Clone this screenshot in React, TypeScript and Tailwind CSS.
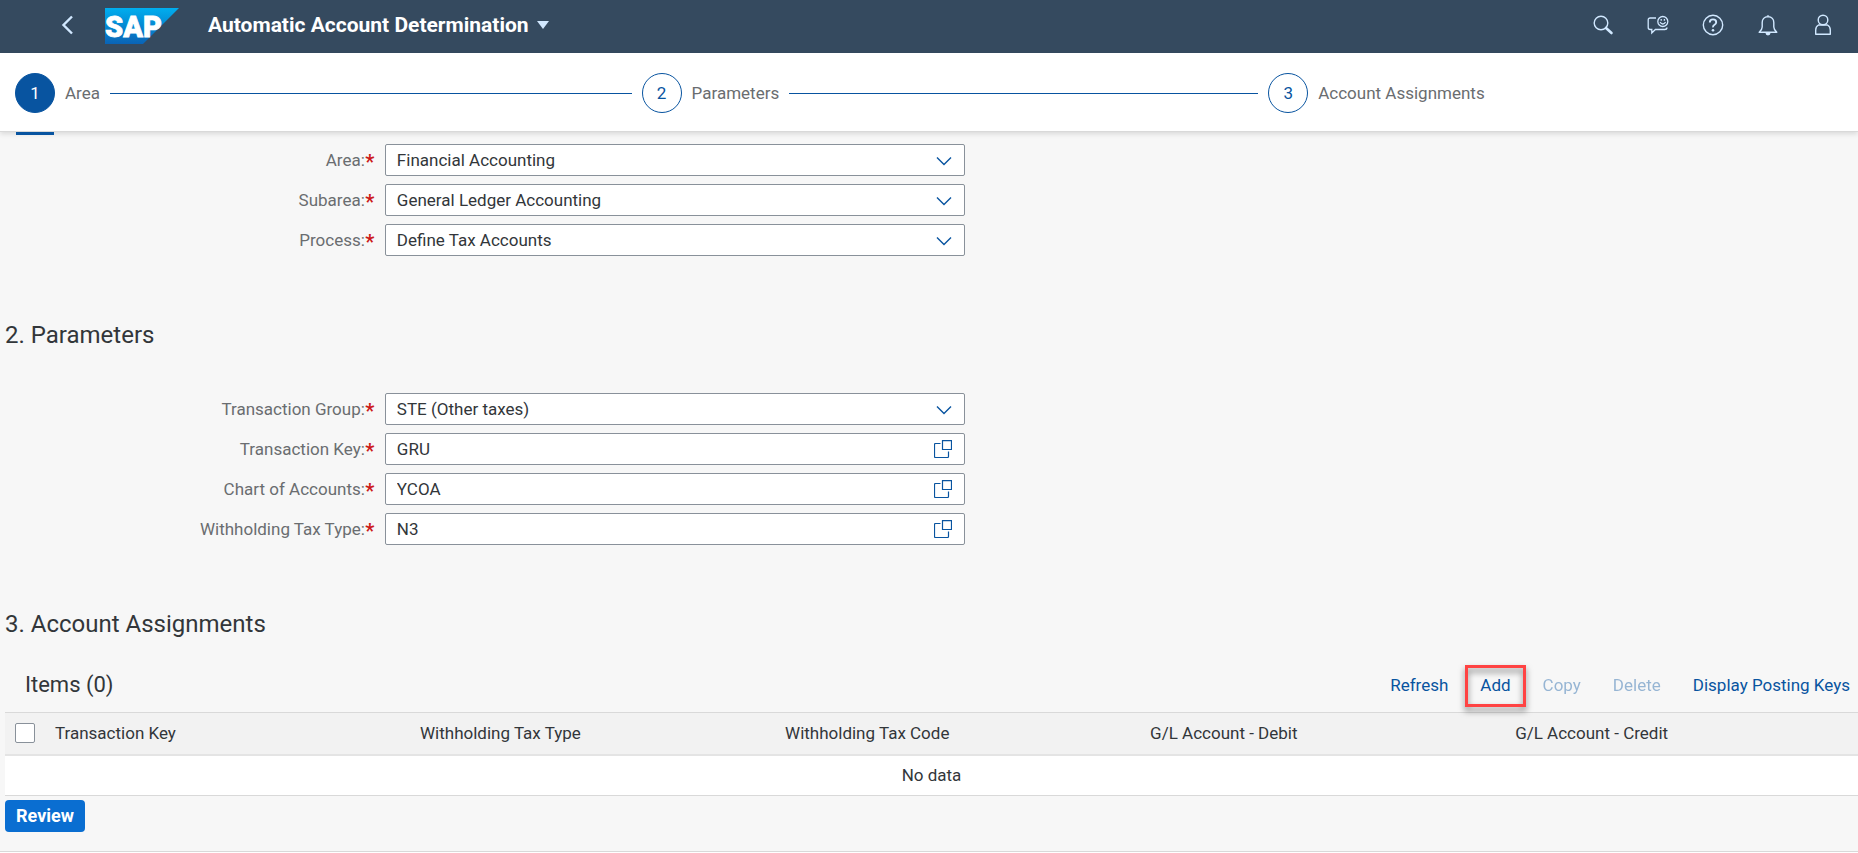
import React, { useState } from 'react';

interface SelectFieldProps {
  id: string;
  label: string;
  options: string[];
}

interface ValueHelpFieldProps {
  id: string;
  label: string;
  initialValue: string;
}

const steps = ['Area', 'Parameters', 'Account Assignments'];

const areaFields: SelectFieldProps[] = [
  { id: 'area', label: 'Area', options: ['Financial Accounting'] },
  { id: 'subarea', label: 'Subarea', options: ['General Ledger Accounting'] },
  { id: 'process', label: 'Process', options: ['Define Tax Accounts'] },
];

const valueHelpFields: ValueHelpFieldProps[] = [
  { id: 'transaction-key', label: 'Transaction Key', initialValue: 'GRU' },
  { id: 'chart-of-accounts', label: 'Chart of Accounts', initialValue: 'YCOA' },
  { id: 'withholding-tax-type', label: 'Withholding Tax Type', initialValue: 'N3' },
];

const columns = [
  'Transaction Key',
  'Withholding Tax Type',
  'Withholding Tax Code',
  'G/L Account - Debit',
  'G/L Account - Credit',
];

const SapLogo = () => (
  <svg width="74" height="36" viewBox="0 0 74 36" role="img" aria-label="SAP">
    <defs>
      <linearGradient id="sap-blue" x1="0" y1="0" x2="0" y2="1">
        <stop offset="0" stopColor="#00aeef" />
        <stop offset="1" stopColor="#0a63b5" />
      </linearGradient>
    </defs>
    <path d="M0 0h74L38 36H0z" fill="url(#sap-blue)" />
    <text
      x="0"
      y="28.5"
      fill="#fff"
      stroke="#fff"
      strokeWidth="0.8"
      fontFamily="Roboto, sans-serif"
      fontWeight="900"
      fontSize="29"
    >
      SAP
    </text>
  </svg>
);

const SearchIcon = () => (
  <svg width="22" height="22" viewBox="0 0 22 22" fill="none" stroke="currentColor">
    <circle cx="9" cy="9" r="6.8" strokeWidth="1.4" />
    <path d="M14 14l5.5 5" strokeWidth="2.6" strokeLinecap="round" />
  </svg>
);

const FeedbackIcon = () => (
  <svg width="22" height="22" viewBox="0 0 22 22" fill="none" stroke="currentColor" strokeWidth="1.3">
    <path d="M9 4H3.2Q1.2 4 1.2 6v7.5q0 2 2 2h1.6V19l3.6-3.5h9.4q2 0 2.4-2" />
    <circle cx="15.8" cy="7.5" r="5" />
    <path d="M13 8.2q2.8 3.6 5.6 0" />
    <path d="M14.2 5v1.8M17.4 5v1.8" />
  </svg>
);

const HelpIcon = () => (
  <svg width="22" height="22" viewBox="0 0 22 22" fill="none" stroke="currentColor">
    <circle cx="11" cy="11" r="9.7" strokeWidth="1.4" />
    <path d="M7.8 8.4q0-3 3.2-3t3.2 2.8q0 1.5-1.7 2.5T11 13.3" strokeWidth="1.9" />
    <circle cx="11" cy="16.2" r="1.3" fill="currentColor" stroke="none" />
  </svg>
);

const BellIcon = () => (
  <svg width="22" height="22" viewBox="0 0 22 22" fill="none" stroke="currentColor" strokeWidth="1.4">
    <path d="M2.2 18.2h17.6q-3-2.6-3-5.2V8.5q0-5.4-5.8-5.9-5.8.5-5.8 5.9V13q0 2.6-3 5.2z" strokeLinejoin="round" />
    <path d="M9.3 2.2q1.7-2 3.4 0M8.5 19q0 2.4 2.5 2.4t2.5-2.4z" fill="currentColor" stroke="none" />
  </svg>
);

const PersonIcon = () => (
  <svg width="22" height="22" viewBox="0 0 22 22" fill="none" stroke="currentColor" strokeWidth="1.4">
    <circle cx="11" cy="6" r="4.8" />
    <path d="M6.5 11h9q2.8 1.5 2.8 5v4.3H3.7V16q0-3.5 2.8-5z" strokeLinejoin="round" />
  </svg>
);

const shellActions = [
  { label: 'Search', Icon: SearchIcon },
  { label: 'Feedback', Icon: FeedbackIcon },
  { label: 'Help', Icon: HelpIcon },
  { label: 'Notifications', Icon: BellIcon },
  { label: 'Profile', Icon: PersonIcon },
];

const FieldLabel = ({ id, label }: { id: string; label: string }) => (
  <label htmlFor={id} className="flex items-center justify-end pr-[10px] text-[#6a6d70]">
    {label}:<span className="w-[10px] pt-1 text-center text-[20px] font-bold text-[#cc1919]">*</span>
  </label>
);

const SelectField = ({ id, label, options }: SelectFieldProps) => (
  <div className="grid grid-cols-[20.5%_31.3%]">
    <FieldLabel id={id} label={label} />
    <div className="relative">
      <select
        id={id}
        className="block h-8 w-full appearance-none rounded-[2px] border border-[#89919a] bg-white pr-10 pl-[11px] text-[#32363a]"
      >
        {options.map((option) => (
          <option key={option}>{option}</option>
        ))}
      </select>
      <svg
        width="16"
        height="16"
        viewBox="0 0 16 16"
        className="pointer-events-none absolute top-[9px] right-[13px] text-[#0854a0]"
      >
        <path d="M1 4.5l7 7 7-7" fill="none" stroke="currentColor" strokeWidth="1.4" />
      </svg>
    </div>
  </div>
);

const ValueHelpField = ({ id, label, initialValue }: ValueHelpFieldProps) => {
  const [value, setValue] = useState(initialValue);

  return (
    <div className="grid grid-cols-[20.5%_31.3%]">
      <FieldLabel id={id} label={label} />
      <div className="flex h-8 rounded-[2px] border border-[#89919a] bg-white">
        <input
          id={id}
          type="text"
          value={value}
          onChange={(e) => setValue(e.target.value)}
          className="min-w-0 flex-1 bg-transparent pl-[11px] text-[#32363a] outline-none"
        />
        <button
          type="button"
          aria-label={`Select ${label}`}
          className="flex w-[42px] items-center justify-center text-[#0854a0]"
        >
          <svg width="18" height="18" viewBox="0 0 18 18" fill="none" stroke="currentColor" strokeWidth="1.2">
            <path d="M6.5 3.5h-5q-1 0-1 1v12q0 1 1 1h12q1 0 1-1v-5" />
            <path d="M8.5 0.6h9v8.900h-9z" />
          </svg>
        </button>
      </div>
    </div>
  );
};

const App = () => {
  return (
    <div className="min-h-screen bg-white font-[Roboto,sans-serif] text-[17px] leading-6 text-[#32363a]">
      <header className="flex h-[53px] items-center bg-[#354a5f] pr-2 pb-[3px] pl-[53px] text-[#d1e8ff]">
        <button type="button" aria-label="Back" className="flex h-9 w-7 items-center justify-center">
          <svg width="12" height="20" viewBox="0 0 12 20" fill="none" stroke="currentColor" strokeWidth="2.4">
            <path d="M11 1.5L2.5 10l8.5 8.5" />
          </svg>
        </button>
        <a href="#home" className="ml-6 pt-[2px]">
          <SapLogo />
        </a>
        <button type="button" className="ml-[29px] flex items-center gap-2">
          <h1 className="text-[21px] font-bold text-white">Automatic Account Determination</h1>
          <svg width="12" height="8" viewBox="0 0 12 8" fill="currentColor">
            <path d="M0 0h12L6 8z" />
          </svg>
        </button>
        <div className="ml-auto flex">
          {shellActions.map(({ label, Icon }) => (
            <button
              key={label}
              type="button"
              aria-label={label}
              className="flex h-10 w-[55px] items-center justify-center"
            >
              <Icon />
            </button>
          ))}
        </div>
      </header>

      <nav
        aria-label="Wizard progress"
        className="relative border-b border-[#d9d9d9] bg-white pl-[15px] shadow-[0_2px_5px_rgba(0,0,0,0.12)]"
      >
        <ol className="grid grid-cols-[34%_34%_1fr]">
          {steps.map((step, index) => (
            <li key={step} className="flex h-[78px] items-center gap-[10px] pt-[2px] pr-[10px]">
              <button type="button" className="flex items-center gap-[10px] text-[#6a6d70]">
                <span
                  className={
                    index === 0
                      ? 'flex h-10 w-10 items-center justify-center rounded-full border border-[#0854a0] bg-[#0854a0] text-white'
                      : 'flex h-10 w-10 items-center justify-center rounded-full border border-[#0854a0] text-[#0854a0]'
                  }
                >
                  {index + 1}
                </span>
                {step}
              </button>
              {index < steps.length - 1 && <span className="h-[2px] flex-1 border-b border-[#0854a0]" />}
            </li>
          ))}
        </ol>
        {/* marks the current step, hangs over the bottom edge */}
        <span className="absolute -bottom-1 left-4 h-[3px] w-[38px] bg-[#0854a0]" />
      </nav>

      <main className="border-b border-[#d9d9d9] bg-[#f7f7f7] pt-3 pb-[19px] pl-[5px]">
        <section aria-label="Area" className="flex flex-col gap-2">
          {areaFields.map((field) => (
            <SelectField key={field.id} {...field} />
          ))}
        </section>

        <section className="mt-[63px]">
          <h2 className="text-[24px] leading-8">2. Parameters</h2>
          <div className="mt-[42px] flex flex-col gap-2">
            <SelectField id="transaction-group" label="Transaction Group" options={['STE (Other taxes)']} />
            {valueHelpFields.map((field) => (
              <ValueHelpField key={field.id} {...field} />
            ))}
          </div>
        </section>

        <section className="mt-[63px]">
          <h2 className="text-[24px] leading-8">3. Account Assignments</h2>
          <div className="mt-[18px] flex h-[54px] items-center gap-8 pr-2 pl-5 text-[#0854a0]">
            <h3 className="mr-auto text-[22px] text-[#32363a]">Items (0)</h3>
            <button type="button">Refresh</button>
            <button type="button" className="relative">
              Add
              <span className="absolute -inset-x-[15px] -top-2 -bottom-[10px] border-[3px] border-[#ff4343] drop-shadow-[0_4px_3px_rgba(0,0,0,0.5)]" />
            </button>
            <button type="button" disabled className="opacity-40">
              Copy
            </button>
            <button type="button" disabled className="opacity-40">
              Delete
            </button>
            <button type="button">Display Posting Keys</button>
          </div>

          <table className="w-full table-fixed border-collapse">
            <thead>
              <tr className="h-[42px] border-t border-b-2 border-t-[#d9d9d9] border-b-[#e4e4e4] bg-[#f2f2f2]">
                <th className="w-[42px] pl-[10px] text-left">
                  <input
                    type="checkbox"
                    aria-label="Select all items"
                    className="block h-5 w-5 appearance-none rounded-[2px] border border-[#89919a] bg-white"
                  />
                </th>
                {columns.map((column, index) => (
                  <th
                    key={column}
                    className={
                      index < columns.length - 1
                        ? 'w-[19.7%] px-2 text-left font-normal'
                        : 'px-2 text-left font-normal'
                    }
                  >
                    {column}
                  </th>
                ))}
              </tr>
            </thead>
            <tbody>
              <tr className="h-[41px] border-b border-[#d9d9d9] bg-white">
                <td colSpan={columns.length + 1} className="text-center">
                  No data
                </td>
              </tr>
            </tbody>
          </table>
        </section>

        <button
          type="button"
          className="mt-1 h-8 rounded-[4px] bg-[#0a6ed1] px-[11px] text-[18px] font-bold text-white"
        >
          Review
        </button>
      </main>
    </div>
  );
};

export default App;
